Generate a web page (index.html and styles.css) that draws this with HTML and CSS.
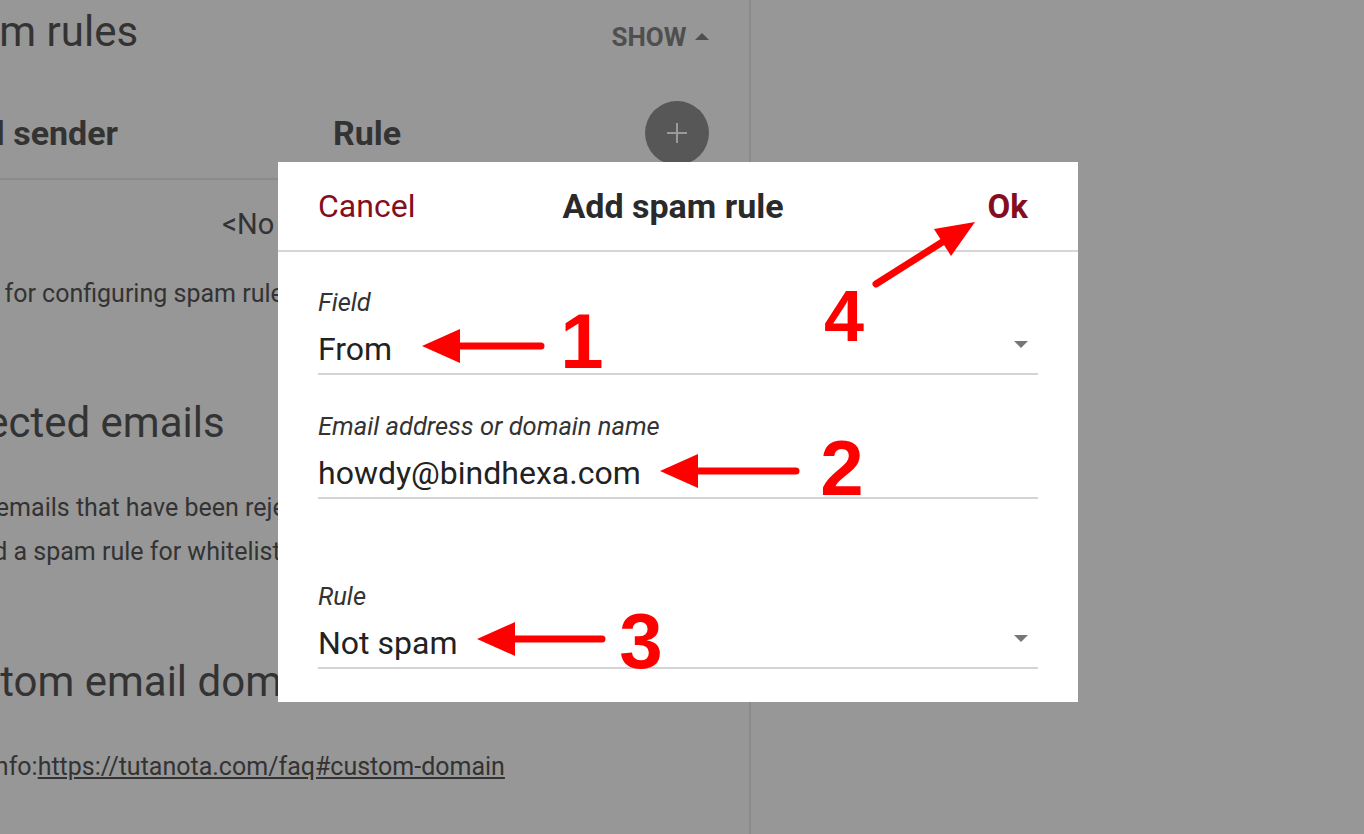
FILE: index.html
```html
<!DOCTYPE html>
<html lang="en">
<head>
    <meta charset="UTF-8">
    <meta name="viewport" content="width=device-width, initial-scale=1.0">
    <title>Add spam rule</title>
    <link rel="stylesheet" href="styles.css">
</head>
<body>
    <div id="settings">
        <div class="settings-inner">
            <div class="title-row">
                <h1 class="heading">Spam rules</h1>
                <span class="show-toggle">SHOW <span class="caret-up"></span></span>
            </div>
            <div class="table-head">
                <span>Email sender</span>
                <span>Rule</span>
                <button class="add-button" type="button">
                    <svg width="24" height="24" viewBox="0 0 24 24"><path d="M12 2v20M2 12h20" stroke="#9a9a9a" stroke-width="2"/></svg>
                </button>
            </div>
            <div class="empty-row">&lt;No entries&gt;</div>
            <p class="note help-note">Guide for configuring spam rules.</p>
            <h1 class="heading section">Rejected emails</h1>
            <p class="text">Show emails that have been rejected by the server.<br>Go add a spam rule for whitelisting.</p>
            <h1 class="heading section domains">Custom email domains</h1>
            <p class="note link-note">More info:<a href="#">https://tutanota.com/faq#custom-domain</a></p>
        </div>
    </div>

    <div id="dialog">
        <div class="dialog-header">
            <button class="text-button" type="button">Cancel</button>
            <h2>Add spam rule</h2>
            <button class="text-button ok" type="button">Ok</button>
        </div>
        <div class="dialog-body">
            <div class="field">
                <label>Field</label>
                <div class="value">From<span class="caret-down"></span></div>
            </div>
            <div class="field">
                <label>Email address or domain name</label>
                <div class="value">howdy@bindhexa.com</div>
            </div>
            <div class="field rule-field">
                <label>Rule</label>
                <div class="value">Not spam<span class="caret-down"></span></div>
            </div>
        </div>
    </div>

    <svg id="marks" width="1364" height="834" viewBox="0 0 1364 834">
        <g stroke="#ff0000" stroke-width="7" stroke-linecap="round" fill="none">
            <path d="M541 346H452"/>
            <path d="M796 471H692"/>
            <path d="M602 639H508"/>
            <path d="M876 284L944 241"/>
        </g>
        <g fill="#ff0000">
            <polygon points="422,346 460,329 460,363"/>
            <polygon points="660,471 698,454 698,488"/>
            <polygon points="477,639 515,622 515,656"/>
            <polygon points="975,222 951,256 934,229"/>
        </g>
        <g class="digits">
            <text x="582" y="368">1</text>
            <text x="842" y="495">2</text>
            <text x="641" y="668">3</text>
            <text x="844" y="341" class="four">4</text>
        </g>
    </svg>
</body>
</html>
```

FILE: styles.css
```css
body {
    margin: 0;
    height: 834px;
    overflow: hidden;
    background-color: #979797;
    color: #333333;
    font-family: Roboto, "Liberation Sans", sans-serif;
}
#settings {
    width: 749px;
    height: 834px;
    border-right: 2px solid #8b8b8b;
    overflow: hidden;
}
.settings-inner {
    margin-left: -72px;
    padding-right: 40px;
    white-space: nowrap;
}
.title-row {
    display: flex;
    justify-content: space-between;
    align-items: baseline;
    margin-top: 7px;
}
.heading {
    margin: 0;
    font-size: 42px;
    font-weight: 400;
    line-height: 50px;
}
.show-toggle {
    font-size: 26px;
    font-weight: 700;
    color: #4f4f4f;
}
.caret-up {
    display: inline-block;
    width: 0;
    height: 0;
    margin-left: 2px;
    border-left: 7px solid transparent;
    border-right: 7px solid transparent;
    border-bottom: 7px solid #4f4f4f;
    vertical-align: 6px;
}
.table-head {
    display: grid;
    grid-template-columns: 413px 1fr 64px;
    align-items: center;
    margin-top: 44px;
    margin-left: -8px;
    padding-bottom: 13px;
    border-bottom: 2px solid #8b8b8b;
    font-size: 34px;
    font-weight: 700;
}
.add-button {
    width: 64px;
    height: 64px;
    border: none;
    border-radius: 50%;
    background-color: #575757;
    display: flex;
    align-items: center;
    justify-content: center;
    padding: 0;
}
.empty-row {
    margin-top: 24px;
    padding-right: 30px;
    text-align: center;
    font-size: 29px;
    line-height: 40px;
}
.note {
    margin: 34px 0 0;
    font-size: 25px;
    line-height: 32px;
}
.help-note {
    text-indent: 6px;
}
.section {
    margin-top: 88px;
}
.text {
    margin: 38px 0 0;
    font-size: 25px;
    line-height: 44px;
}
.domains {
    margin-top: 83px;
}
.link-note {
    margin-top: 44px;
    margin-left: -3px;
}
.link-note a {
    color: #333333;
}

#dialog {
    position: absolute;
    left: 278px;
    top: 162px;
    width: 800px;
    height: 540px;
    background-color: #ffffff;
    color: #222222;
}
.dialog-header {
    display: grid;
    grid-template-columns: 1fr auto 1fr;
    align-items: center;
    height: 88px;
    padding: 0 50px 0 40px;
    border-bottom: 2px solid #d6d6d6;
}
.dialog-header h2 {
    margin: 0;
    font-size: 34px;
    font-weight: 700;
    color: #2a2a2a;
}
.text-button {
    justify-self: start;
    border: none;
    background: none;
    padding: 0;
    font-family: inherit;
    font-size: 32px;
    color: #850d22;
}
.text-button.ok {
    justify-self: end;
    font-size: 33px;
    font-weight: 700;
}
.dialog-body {
    padding: 34px 40px 0;
}
.field {
    border-bottom: 2px solid #d4d4d4;
    padding-bottom: 4px;
    margin-bottom: 35px;
}
.field label {
    display: block;
    font-size: 25.5px;
    font-style: italic;
    line-height: 32px;
    color: #333333;
}
.field .value {
    display: flex;
    justify-content: space-between;
    align-items: center;
    margin-top: 11px;
    font-size: 32px;
    line-height: 40px;
}
.rule-field {
    margin-top: 81px;
}
.caret-down {
    width: 0;
    height: 0;
    margin-right: 10px;
    margin-bottom: 10px;
    border-left: 7px solid transparent;
    border-right: 7px solid transparent;
    border-top: 7px solid #777777;
}

#marks {
    position: absolute;
    left: 0;
    top: 0;
    pointer-events: none;
}
.digits text {
    fill: #ff0000;
    font-family: "Liberation Sans", Arial, sans-serif;
    font-size: 78px;
    font-weight: 700;
    text-anchor: middle;
}
.digits text.four {
    font-size: 72px;
}
```
